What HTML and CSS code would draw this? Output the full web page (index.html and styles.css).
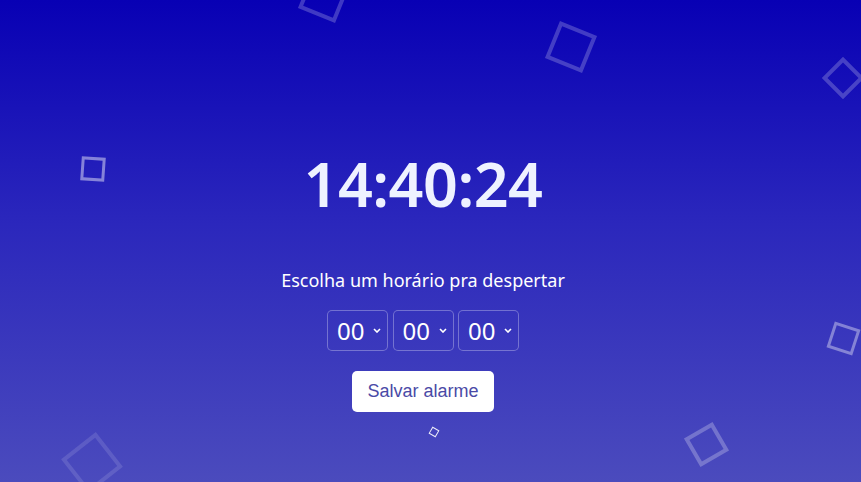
FILE: index.html
```html
<!DOCTYPE html>
<html lang="pt-BR">
<head>
<meta charset="utf-8">
<title>Despertador</title>
<link rel="stylesheet" href="styles.css">
</head>
<body>
<div class="bg">
  <span class="sq sq1"></span>
  <span class="sq sq2"></span>
  <span class="sq sq3"></span>
  <span class="sq sq4"></span>
  <span class="sq sq5"></span>
  <span class="sq sq6"></span>
  <span class="sq sq7"></span>
  <span class="sq sq8"></span>
</div>
<main class="app">
  <h1 class="clock">14:40:24</h1>
  <p class="label">Escolha um horário pra despertar</p>
  <div class="selects">
    <select class="sel"><option>00</option></select>
    <select class="sel"><option>00</option></select>
    <select class="sel"><option>00</option></select>
  </div>
  <button class="save">Salvar alarme</button>
</main>
</body>
</html>
```

FILE: styles.css
```css
* { box-sizing: border-box; }
html, body { margin: 0; height: 100%; }
body {
  background: linear-gradient(180deg, #0800b4 0%, #2a26bc 45%, #4b4bbd 100%);
  font-family: "Noto Sans", "Open Sans", sans-serif;
  color: #fff;
  overflow: hidden;
  position: relative;
}
.bg { position: absolute; inset: 0; pointer-events: none; }
.sq {
  position: absolute;
  display: block;
  border: 4px solid rgba(255,255,255,0.22);
}
.sq1 { left: 304px; top: -23px; width: 40px; height: 40px; transform: rotate(22deg); }
.sq2 { left: 551px; top: 27px; width: 40px; height: 40px; transform: rotate(22deg); }
.sq3 { left: 828px; top: 63px; width: 30px; height: 30px; transform: rotate(45deg); }
.sq4 { left: 81px; top: 157px; width: 24px; height: 24px; transform: rotate(4deg); border-width: 3px; border-color: rgba(255,255,255,0.45); }
.sq5 { left: 830px; top: 325px; width: 27px; height: 27px; transform: rotate(18deg); border-width: 3px; border-color: rgba(255,255,255,0.38); }
.sq6 { left: 70px; top: 441px; width: 44px; height: 44px; transform: rotate(-38deg); border-color: rgba(255,255,255,0.12); }
.sq7 { left: 690px; top: 428px; width: 33px; height: 33px; transform: rotate(-30deg); border-color: rgba(255,255,255,0.25); }
.sq8 { left: 430px; top: 428px; width: 8px; height: 8px; transform: rotate(30deg); border-width: 1px; border-color: rgba(255,255,255,0.9); }

.app {
  position: relative;
  width: 846px;
  display: flex;
  flex-direction: column;
  align-items: center;
  padding-top: 149px;
}
.clock {
  margin: 0;
  font-size: 61px;
  line-height: 70px;
  font-weight: 600;
  color: #eef2ff;
  letter-spacing: -0.5px;
}
.label {
  margin: 49px 0 0;
  font-size: 18px;
  line-height: 24px;
}
.selects {
  display: flex;
  gap: 4.5px;
  margin-top: 18px;
}
.sel {
  appearance: none;
  -webkit-appearance: none;
  width: 61px;
  height: 41px;
  background: transparent url("data:image/svg+xml;utf8,<svg xmlns='http://www.w3.org/2000/svg' width='8' height='5' viewBox='0 0 8 5'><path d='M1 1l3 3 3-3' fill='none' stroke='white' stroke-width='1.6'/></svg>") no-repeat right 6px center;
  border: 1px solid rgba(255,255,255,0.3);
  border-radius: 5px;
  color: #fff;
  font-family: "Noto Sans", "Open Sans", sans-serif;
  font-size: 24px;
  padding: 0 0 0 9px;
}
.save {
  margin-top: 20px;
  width: 142px;
  height: 41px;
  border: none;
  border-radius: 5px;
  background: #fff;
  color: #4a4aa6;
  font-family: "Liberation Sans", Arial, sans-serif;
  font-size: 18px;
}
```
